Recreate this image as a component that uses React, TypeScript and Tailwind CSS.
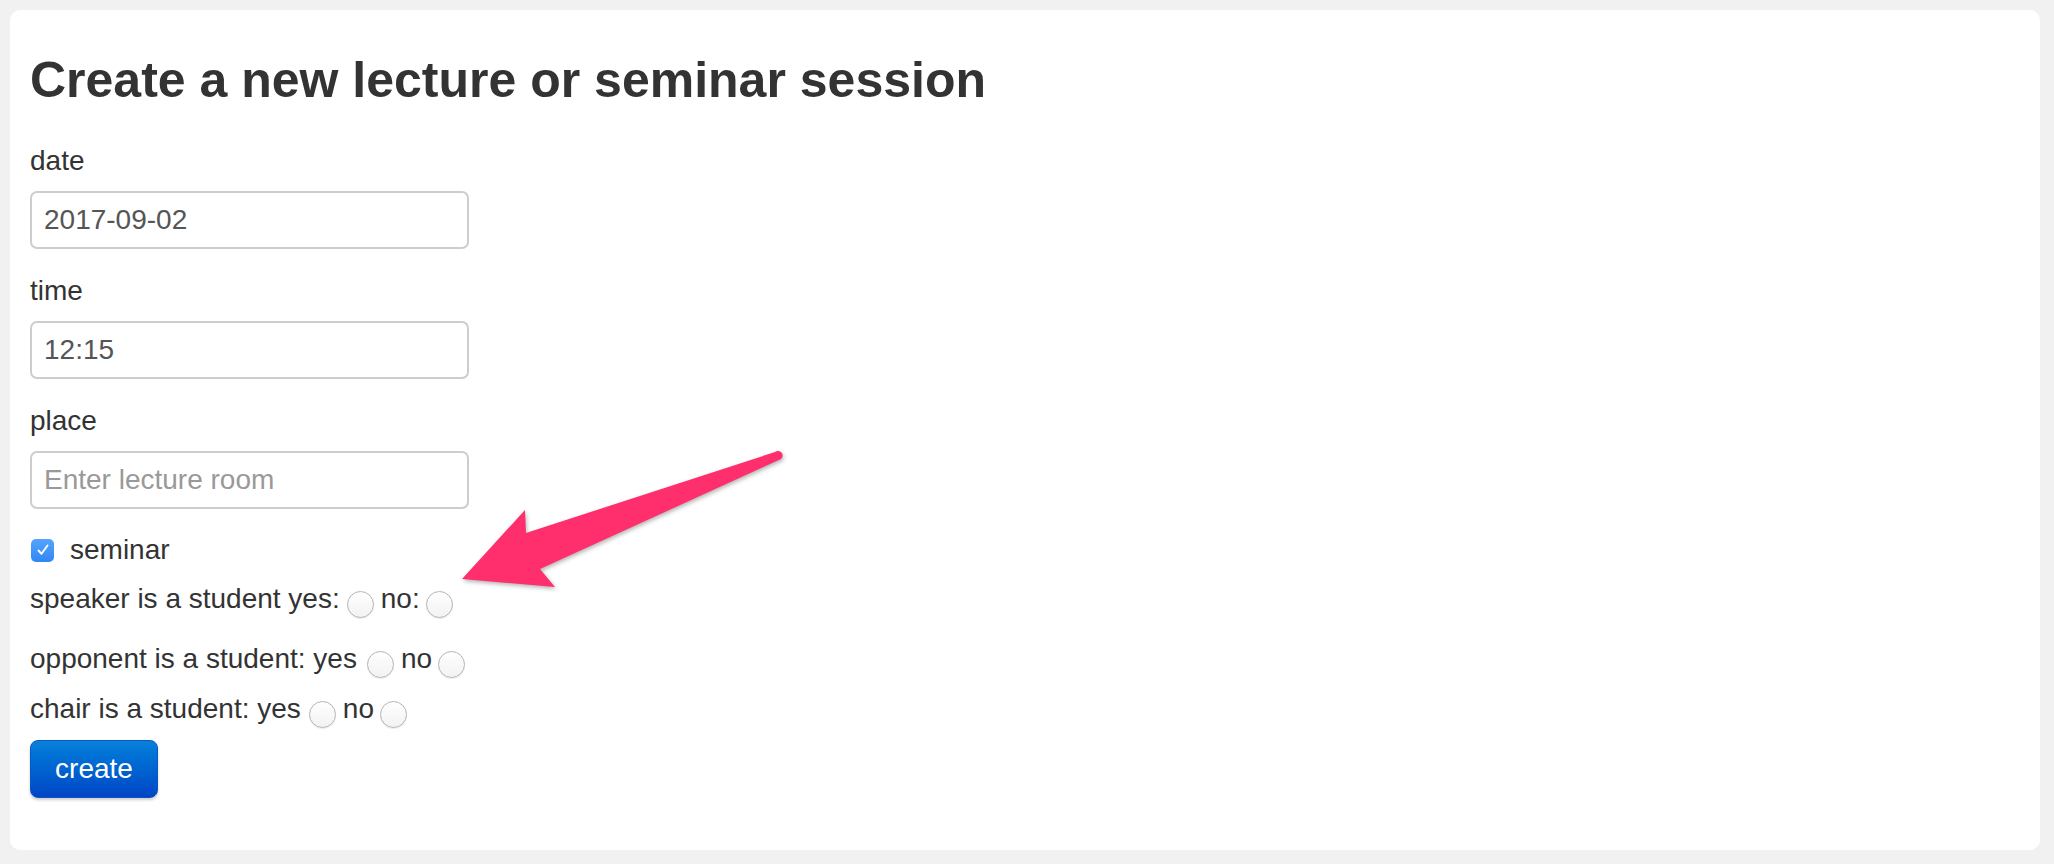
import React from "react";

function Radio({ className = "" }: { className?: string }) {
  return (
    <span
      className={`inline-block h-[27px] w-[27px] rounded-full border border-[#b4b4b4] bg-gradient-to-b from-white to-[#f2f2f2] align-[-10px] shadow-[0_1px_1px_rgba(0,0,0,0.08)] ${className}`}
    />
  );
}

function Field({ label, value, placeholder }: { label: string; value?: string; placeholder?: string }) {
  return (
    <div className="mb-[22px]">
      <label className="mb-[10px] block text-[28px] leading-[40px] text-[#333]">{label}</label>
      <input
        readOnly
        defaultValue={value}
        placeholder={placeholder}
        className="block h-[58px] w-[439px] rounded-[7px] border-2 border-[#cdcdcd] bg-white px-[12px] text-[28px] text-[#555] outline-none placeholder:text-[#999]"
      />
    </div>
  );
}

export default function App() {
  return (
    <div className="min-h-screen bg-[#f1f1f1] pb-[14px] pl-[10px] pr-[14px] pt-[10px] font-['Liberation_Sans',Arial,sans-serif]">
      <div className="relative h-[840px] rounded-[10px] bg-white px-[20px] pt-[43px]">
        <h2 className="text-[50px] font-bold leading-[55px] text-[#333]">Create a new lecture or seminar session</h2>

        <form className="mt-[33px]">
          <Field label="date" value="2017-09-02" />
          <Field label="time" value="12:15" />
          <Field label="place" placeholder="Enter lecture room" />

          <div className="-mt-px flex h-[40px] items-center text-[28px] text-[#333]">
            <span className="ml-px flex h-[23px] w-[23px] items-center justify-center rounded-[5px] bg-gradient-to-b from-[#56a4fb] to-[#2f86f4]">
              <svg width="16" height="16" viewBox="0 0 16 16" fill="none">
                <path d="M3.5 8.5 L6.5 11.8 L12.5 3.5" stroke="white" strokeWidth="1.9" strokeLinecap="round" strokeLinejoin="round" />
              </svg>
            </span>
            <span className="ml-[16px]">seminar</span>
          </div>

          <div className="mt-[9px] text-[28px] leading-[40px] text-[#333]">
            speaker is a student yes:<Radio className="ml-[7px]" />
            <span className="ml-[7px]">no:</span>
            <Radio className="ml-[6px]" />
          </div>

          <div className="mt-[20px] text-[28px] leading-[40px] text-[#333]">
            opponent is a student: yes<Radio className="ml-[10px]" />
            <span className="ml-[7px]">no</span>
            <Radio className="ml-[6px]" />
          </div>

          <div className="mt-[10px] text-[28px] leading-[40px] text-[#333]">
            chair is a student: yes<Radio className="ml-[8px]" />
            <span className="ml-[7px]">no</span>
            <Radio className="ml-[6px]" />
          </div>

          <button
            type="button"
            className="mt-[11px] h-[58px] w-[128px] rounded-[8px] border border-[#0a55c8] bg-gradient-to-b from-[#0b80da] to-[#0045c6] text-[28px] text-white shadow-[0_2px_3px_rgba(0,0,0,0.2)]"
          >
            create
          </button>
        </form>

        {/* annotation arrow */}
        <svg
          className="pointer-events-none absolute left-[430px] top-[420px] drop-shadow-[1px_2px_2px_rgba(0,0,0,0.3)]"
          width="380"
          height="180"
          viewBox="0 0 380 180"
        >
          <path
            d="M335 22 L86 103 L85 80 L22 149 L115 157 L100 139 L341 29 A3.6 3.6 0 0 0 335 22 Z"
            fill="#fe2f6c"
          />
        </svg>
      </div>
    </div>
  );
}
